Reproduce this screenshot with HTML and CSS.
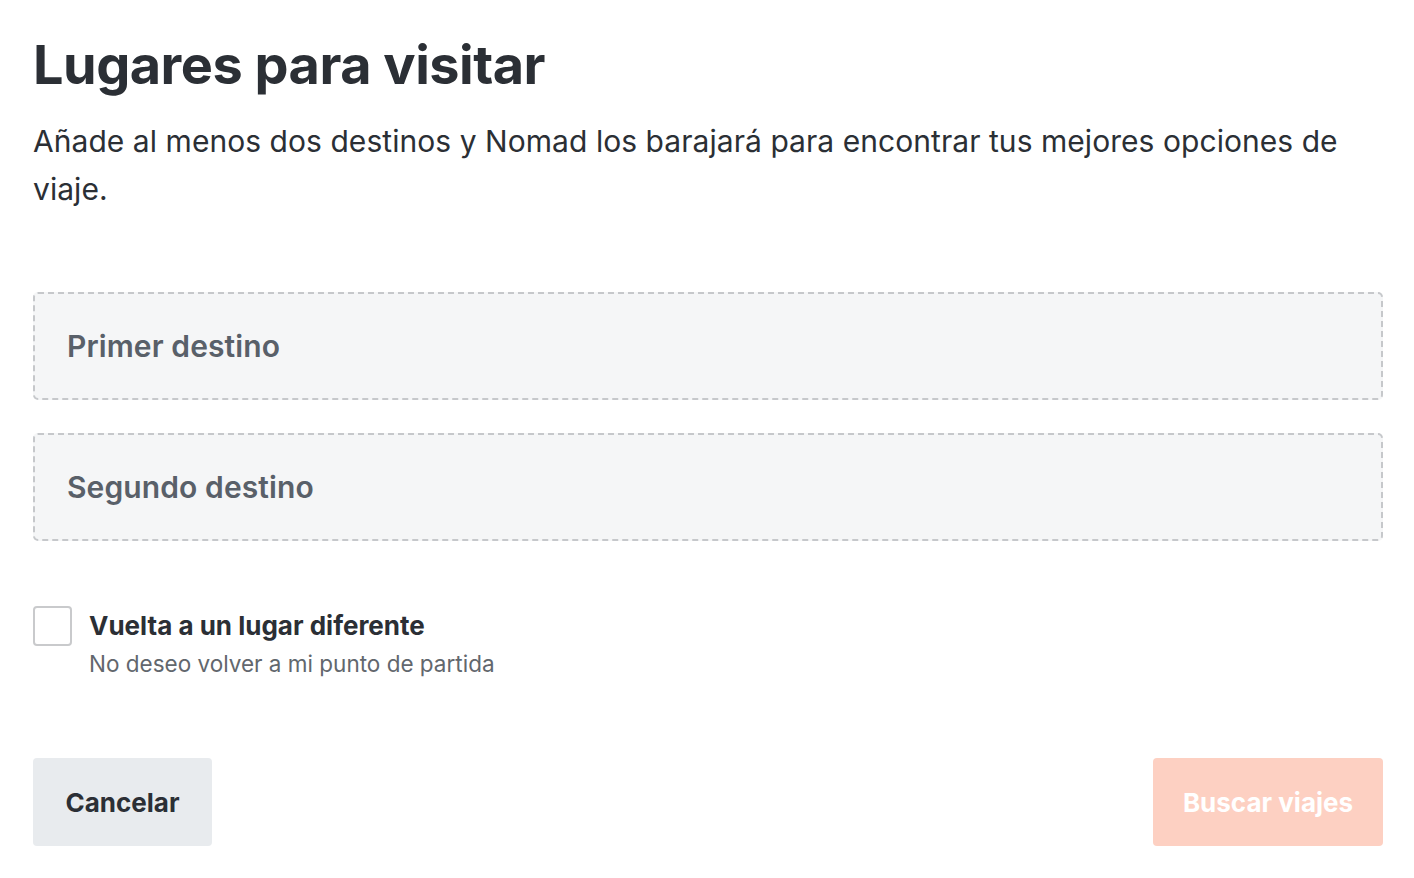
FILE: index.html
```html
<!DOCTYPE html>
<html lang="es">
<head>
<meta charset="utf-8">
<title>Lugares para visitar</title>
<link rel="stylesheet" href="styles.css">
</head>
<body>
<main class="page">
  <h1 class="title">Lugares para visitar</h1>
  <p class="intro">Añade al menos dos destinos y Nomad los barajará para encontrar tus mejores opciones de viaje.</p>

  <div class="fields">
    <div class="field"><span class="placeholder">Primer destino</span></div>
    <div class="field"><span class="placeholder">Segundo destino</span></div>
  </div>

  <label class="check">
    <span class="box"></span>
    <span class="check-text">
      <span class="check-title">Vuelta a un lugar diferente</span>
      <span class="check-sub">No deseo volver a mi punto de partida</span>
    </span>
  </label>

  <div class="actions">
    <button class="btn btn-cancel">Cancelar</button>
    <button class="btn btn-search">Buscar viajes</button>
  </div>
</main>
</body>
</html>
```

FILE: styles.css
```css
* { box-sizing: border-box; }
html, body { margin: 0; padding: 0; background: #fff; }
body {
  font-family: "Inter", "Noto Sans", sans-serif;
  color: #2b2f35;
}
.page {
  padding: 30px 31px 0 33px;
  display: flex;
  flex-direction: column;
}
.title {
  margin: 0;
  font-size: 54px;
  font-weight: 700;
  line-height: 70px;
  letter-spacing: -0.5px;
  color: #2b2f35;
}
.intro {
  margin: 17px 0 0;
  max-width: 1330px;
  font-size: 30px;
  line-height: 48px;
  letter-spacing: 0.05px;
  font-weight: 400;
  color: #2b2f35;
}
.fields {
  margin-top: 79px;
  display: flex;
  flex-direction: column;
  gap: 33px;
}
.field {
  height: 108px;
  background: #f5f6f7;
  border: 2px dashed #c6c8cb;
  border-radius: 5px;
  display: flex;
  align-items: center;
  padding-left: 32px;
}
.placeholder {
  font-size: 30px;
  font-weight: 600;
  letter-spacing: 0.1px;
  color: #596069;
}
.check {
  margin-top: 65px;
  display: flex;
  gap: 17px;
  align-items: flex-start;
}
.box {
  width: 39px;
  height: 40px;
  border: 2px solid #c9cacc;
  border-radius: 4px;
  flex: none;
}
.check-text { display: flex; flex-direction: column; }
.check-title {
  font-size: 26px;
  font-weight: 700;
  line-height: 40px;
  color: #2b2f35;
}
.check-sub {
  margin-top: 3px;
  font-size: 22.5px;
  line-height: 30px;
  color: #62676d;
}
.actions {
  margin-top: 79px;
  display: flex;
  justify-content: space-between;
}
.btn {
  border: 0;
  border-radius: 4px;
  height: 88px;
  padding: 0;
  white-space: nowrap;
  font-family: inherit;
  font-size: 26px;
  font-weight: 700;
}
.btn-cancel {
  width: 179px;
  background: #e8ebee;
  color: #2b2f35;
}
.btn-search {
  width: 230px;
  background: #fdd0c2;
  color: #ffffff;
}
```
